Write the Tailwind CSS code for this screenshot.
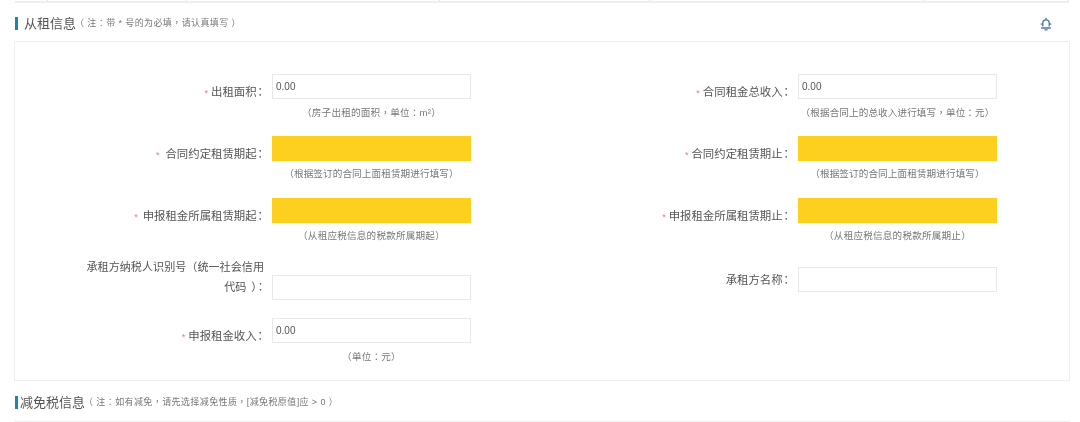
<!DOCTYPE html>
<html><head><meta charset="utf-8"><script src="https://cdn.jsdelivr.net/npm/@tailwindcss/browser@4"></script></head>
<body class="bg-white">
<div class="w-[1080px] h-[422px] overflow-hidden font-['Liberation_Sans','Noto_Sans_CJK_SC',sans-serif] text-[#555] blur-[0.35px]">
  <div class="h-[3px] ml-[15px] w-[1054px] border-b-2 border-[#eee] flex">
    <div class="w-[33px] border-r border-[#e4e4e4]"></div><div class="w-[139px] border-r border-[#e4e4e4]"></div><div class="w-[253px] border-r border-[#e4e4e4]"></div><div class="w-[210px] border-r border-[#e4e4e4]"></div><div class="w-[275px] border-r border-[#e4e4e4]"></div><div class="flex-1 border-r border-[#e4e4e4]"></div>
  </div>
  <div class="h-[38px] flex items-center pl-[15px] pr-[27px] pt-[4px] pb-[1px]">
    <span class="w-[3px] h-[13px] bg-[#1a84b8] mr-[6px]"></span>
    <span class="text-[13px] text-[#555]">从租信息</span>
    <span class="text-[9px] tracking-[0.4px] text-[#777] ml-[-1px]">（ 注<span class="font-['Noto_Sans_CJK_TC']">：</span>带 * 号的为必填<span class="font-['Noto_Sans_CJK_TC']">，</span>请认真填写 ）</span>
    <svg class="ml-auto" width="14" height="14" viewBox="0 0 14 14" fill="none" stroke="#4f76a3" stroke-width="1.3"><path d="M7 .8v1.4M3.8 9.4V6a3.2 3.2 0 0 1 6.4 0v3.4M1.8 6.8l2 .6M12.2 6.8l-2 .6M2.2 11h9.6M5.4 12.9h3.2"/></svg>
  </div>
  <div class="ml-[14px] w-[1056px] h-[340px] border border-[#eee] pt-[32px] grid grid-cols-[526px_1fr] content-start text-[11.4px]">

    <div class="h-[62px] flex">
      <div class="w-[249px] pt-[7px] text-right leading-[20px] shrink-0"><span class="text-[#e77] text-[9px] mr-[3px]">*</span>出租面积<span class="font-['Noto_Sans_CJK_TC'] mx-[-2px]">：</span></div>
      <div class="ml-[8px]"><div class="w-[199px] h-[25px] border border-[#e8e8e8] px-[3px] text-[10px] leading-[24px]">0.00</div><div class="w-[199px] text-center text-[9.6px] tracking-[0.2px] text-[#777] mt-[6px]">（房子出租的面积<span class="font-['Noto_Sans_CJK_TC']">，</span>单位<span class="font-['Noto_Sans_CJK_TC']">：</span>m²）</div></div>
    </div>
    <div class="h-[62px] flex">
      <div class="w-[249px] pt-[7px] text-right leading-[20px] shrink-0"><span class="text-[#e77] text-[9px] mr-[3px]">*</span>合同租金总收入<span class="font-['Noto_Sans_CJK_TC'] mx-[-2px]">：</span></div>
      <div class="ml-[8px]"><div class="w-[199px] h-[25px] border border-[#e8e8e8] px-[3px] text-[10px] leading-[24px]">0.00</div><div class="w-[199px] text-center text-[9.6px] tracking-[0.1px] text-[#777] mt-[6px]">（根据合同上的总收入进行填写<span class="font-['Noto_Sans_CJK_TC']">，</span>单位<span class="font-['Noto_Sans_CJK_TC']">：</span>元）</div></div>
    </div>

    <div class="h-[62px] flex">
      <div class="w-[249px] pt-[7px] text-right leading-[20px] shrink-0"><span class="text-[#e77] text-[9px] mr-[6px]">*</span>合同约定租赁期起<span class="font-['Noto_Sans_CJK_TC'] mx-[-2px]">：</span></div>
      <div class="ml-[8px]"><div class="w-[199px] h-[25px] bg-[#fdd020]"></div><div class="w-[199px] text-center text-[9.6px] tracking-[0.1px] text-[#777] mt-[6px]">（根据签订的合同上面租赁期进行填写）</div></div>
    </div>
    <div class="h-[62px] flex">
      <div class="w-[249px] pt-[7px] text-right leading-[20px] shrink-0"><span class="text-[#e77] text-[9px] mr-[3px]">*</span>合同约定租赁期止<span class="font-['Noto_Sans_CJK_TC'] mx-[-2px]">：</span></div>
      <div class="ml-[8px]"><div class="w-[199px] h-[25px] bg-[#fdd020]"></div><div class="w-[199px] text-center text-[9.6px] tracking-[0.1px] text-[#777] mt-[6px]">（根据签订的合同上面租赁期进行填写）</div></div>
    </div>

    <div class="h-[60px] flex">
      <div class="w-[249px] pt-[7px] text-right leading-[20px] shrink-0"><span class="text-[#e77] text-[9px] mr-[5px]">*</span>申报租金所属租赁期起<span class="font-['Noto_Sans_CJK_TC'] mx-[-2px]">：</span></div>
      <div class="ml-[8px]"><div class="w-[199px] h-[25px] bg-[#fdd020]"></div><div class="w-[199px] text-center text-[9.6px] tracking-[0.2px] text-[#777] mt-[6px]">（从租应税信息的税款所属期起）</div></div>
    </div>
    <div class="h-[60px] flex">
      <div class="w-[249px] pt-[7px] text-right leading-[20px] shrink-0"><span class="text-[#e77] text-[9px] mr-[3px]">*</span>申报租金所属租赁期止<span class="font-['Noto_Sans_CJK_TC'] mx-[-2px]">：</span></div>
      <div class="ml-[8px]"><div class="w-[199px] h-[25px] bg-[#fdd020]"></div><div class="w-[199px] text-center text-[9.6px] tracking-[0.2px] text-[#777] mt-[6px]">（从租应税信息的税款所属期止）</div></div>
    </div>

    <div class="h-[60px] flex">
      <div class="w-[249px] text-right leading-[19px] text-[11.1px] shrink-0">承租方纳税人识别号（统一社会信用<br><span class="mr-[5px]">代码</span>）<span class="font-['Noto_Sans_CJK_TC'] mx-[-2px]">：</span></div>
      <div class="ml-[8px] pt-[17px]"><div class="w-[199px] h-[25px] border border-[#e8e8e8]"></div></div>
    </div>
    <div class="h-[60px] flex">
      <div class="w-[249px] pt-[11px] text-right leading-[20px] shrink-0">承租方名称<span class="font-['Noto_Sans_CJK_TC'] mx-[-2px]">：</span></div>
      <div class="ml-[8px] pt-[9px]"><div class="w-[199px] h-[25px] border border-[#e8e8e8]"></div></div>
    </div>

    <div class="h-[62px] flex">
      <div class="w-[249px] pt-[7px] text-right leading-[20px] shrink-0"><span class="text-[#e77] text-[9px] mr-[3px]">*</span>申报租金收入<span class="font-['Noto_Sans_CJK_TC'] mx-[-2px]">：</span></div>
      <div class="ml-[8px]"><div class="w-[199px] h-[25px] border border-[#e8e8e8] px-[3px] text-[10px] leading-[24px]">0.00</div><div class="w-[199px] text-center text-[9.6px] tracking-[0.2px] text-[#777] mt-[6px]">（单位<span class="font-['Noto_Sans_CJK_TC']">：</span>元）</div></div>
    </div>
  </div>
  <div class="h-[40px] flex items-center pl-[15px] pt-[3px]">
    <span class="w-[3px] h-[13px] bg-[#1a84b8] mr-[2px]"></span>
    <span class="text-[13px] text-[#555]">减免税信息</span>
    <span class="text-[9px] tracking-[0.4px] text-[#777] ml-[-1px]">（ 注<span class="font-['Noto_Sans_CJK_TC']">：</span>如有减免<span class="font-['Noto_Sans_CJK_TC']">，</span>请先选择减免性质<span class="font-['Noto_Sans_CJK_TC']">，</span>[减免税原值]应 &gt; 0 ）</span>
  </div>
  <div class="ml-[14px] w-[1056px] border-t border-[#eee]"></div>
</div>
</body></html>
